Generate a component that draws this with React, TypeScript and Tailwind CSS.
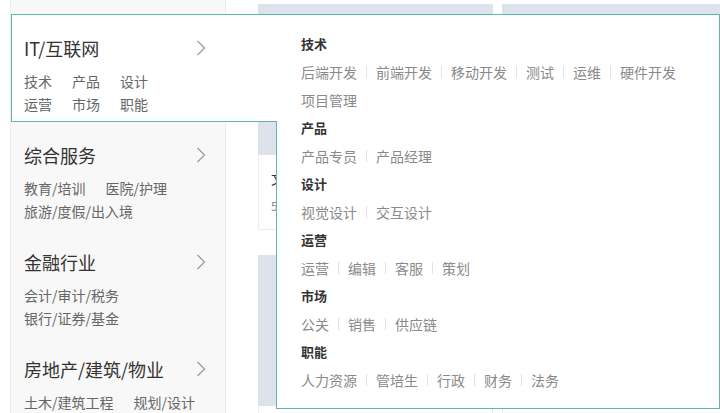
import React from "react";

const categories = [
  { title: "IT/互联网", rows: [["技术", "产品", "设计"], ["运营", "市场", "职能"]] },
  { title: "综合服务", rows: [["教育/培训", "医院/护理"], ["旅游/度假/出入境"]] },
  { title: "金融行业", rows: [["会计/审计/税务"], ["银行/证券/基金"]] },
  { title: "房地产/建筑/物业", rows: [["土木/建筑工程", "规划/设计"], ["物业管理", "房产经纪"]] },
];

const groups = [
  { name: "技术", lines: [["后端开发", "前端开发", "移动开发", "测试", "运维", "硬件开发"], ["项目管理"]] },
  { name: "产品", lines: [["产品专员", "产品经理"]] },
  { name: "设计", lines: [["视觉设计", "交互设计"]] },
  { name: "运营", lines: [["运营", "编辑", "客服", "策划"]] },
  { name: "市场", lines: [["公关", "销售", "供应链"]] },
  { name: "职能", lines: [["人力资源", "管培生", "行政", "财务", "法务"]] },
];

const Chevron = () => (
  <svg width="10" height="16" viewBox="0 0 10 16" fill="none">
    <polyline points="1.5,1 8.5,8 1.5,15" stroke="#9a9a9a" strokeWidth="1.2" />
  </svg>
);

const Card = () => (
  <div className="w-[235px] shrink-0 h-[226px] flex flex-col">
    <div className="h-[151px] bg-[#dde3ec]" />
    <div className="flex-1 bg-white border border-[#ececec] border-t-0 px-3 pt-[13px]">
      <div className="text-[14px] leading-5 text-[#333]">文员</div>
      <div className="mt-2 text-[12px] leading-5 text-[#888]">5-8K</div>
    </div>
  </div>
);

export default function App() {
  return (
    <div className="relative h-[413px] w-[720px] overflow-hidden bg-white font-['Noto_Sans_CJK_SC',sans-serif]">
      <div className="flex">
        {/* sidebar */}
        <div className="ml-[10px] w-[216px] shrink-0 bg-[#f8f8f8] border-x border-[#ececec] pt-[14px] h-[413px]">
          {categories.map((c, i) => {
            const active = i === 0;
            return (
              <div
                key={c.title}
                className={
                  active
                    ? "relative z-20 w-[266px] h-[108px] bg-white border border-r-0 border-[#5fb8aa] pl-3 pt-[23px]"
                    : "h-[107px] border border-transparent pl-3 pt-[22px]"
                }
              >
                <div className="flex w-[182px] items-center justify-between h-5">
                  <span className="text-[18px] leading-5 text-[#333]">{c.title}</span>
                  <Chevron />
                </div>
                <div className="mt-3">
                  {c.rows.map((r, j) => (
                    <div key={j} className="flex gap-5 text-[14px] leading-[23px] text-[#666]">
                      {r.map((s) => (
                        <span key={s}>{s}</span>
                      ))}
                    </div>
                  ))}
                </div>
              </div>
            );
          })}
        </div>

        {/* background cards */}
        <div className="ml-[32px] pt-[4px] flex flex-col gap-[25px]">
          <div className="flex gap-[9px]">
            <Card />
            <Card />
          </div>
          <div className="flex gap-[9px]">
            <Card />
            <Card />
          </div>
        </div>
      </div>

      {/* dropdown panel */}
      <div className="absolute left-[276px] top-[14px] z-10 w-[444px] h-[395px] bg-white border border-[#5fb8aa] pl-6 pt-[15px]">
        {groups.map((g) => (
          <div key={g.name}>
            <div className="text-[13px] leading-[28px] font-bold text-[#333]">{g.name}</div>
            {g.lines.map((line, k) => (
              <div key={k} className="flex items-center text-[14px] leading-[28px] text-[#8a8a8a]">
                {line.map((s, n) => (
                  <React.Fragment key={s}>
                    {n > 0 && <span className="mx-[9px] inline-block h-3 w-px bg-[#e2e2e2]" />}
                    <span>{s}</span>
                  </React.Fragment>
                ))}
              </div>
            ))}
          </div>
        ))}
      </div>
    </div>
  );
}
